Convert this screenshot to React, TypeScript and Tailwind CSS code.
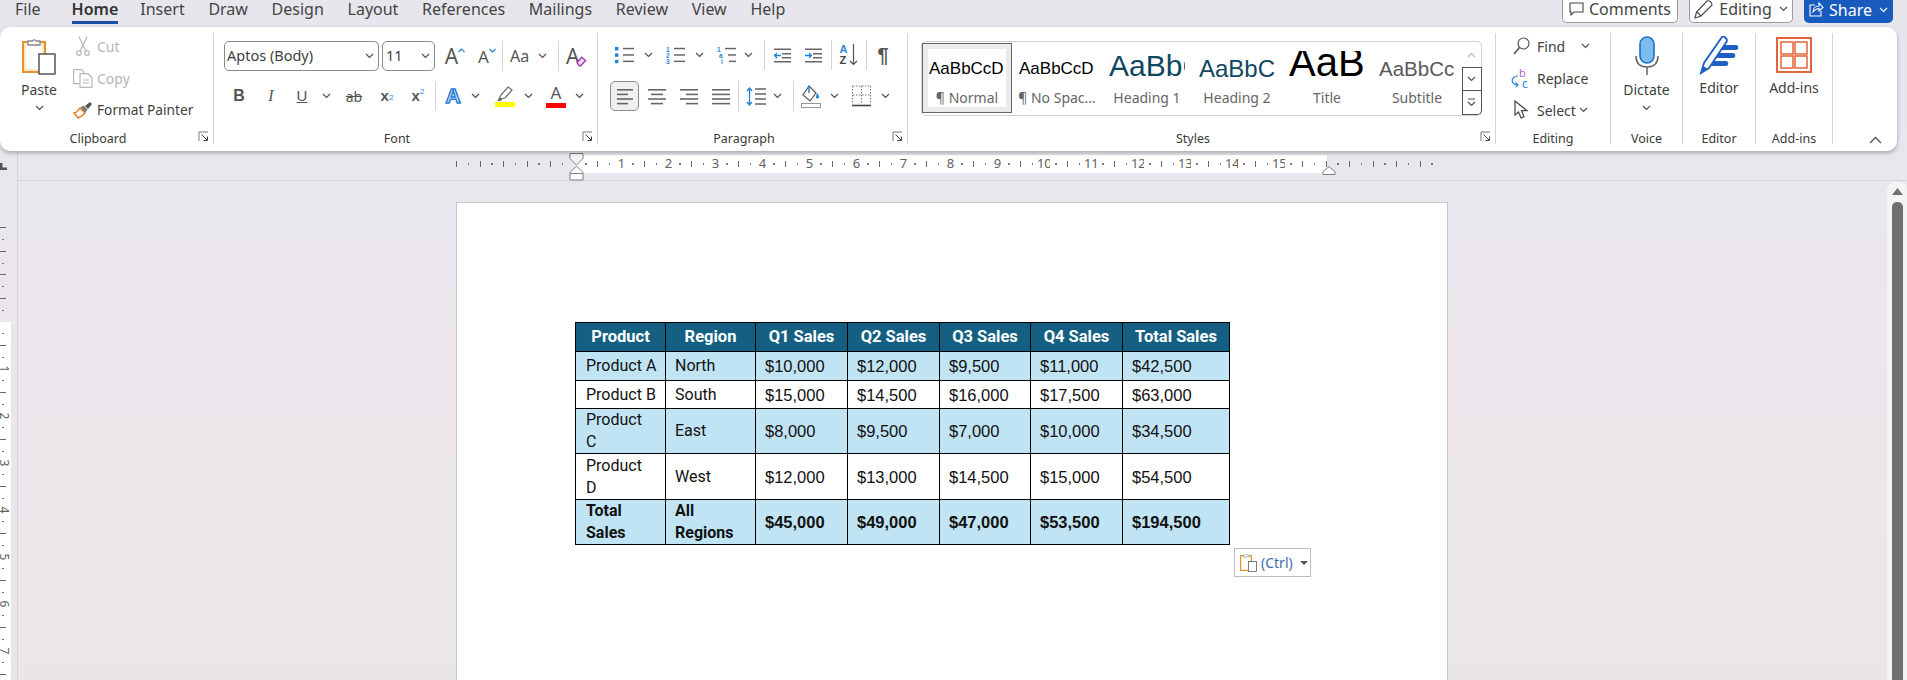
import type { ReactNode } from "react";

const ui = "font-['Noto_Sans',sans-serif]";

function Chev({ className = "" }: { className?: string }) {
  return (
    <svg width="9" height="6" viewBox="0 0 9 6" fill="none" className={className}>
      <path d="M1 1l3.5 3.5L8 1" stroke="#505050" strokeWidth="1.2" />
    </svg>
  );
}

function Slot({ className = "", children }: { className?: string; children?: ReactNode }) {
  return <div className={"flex shrink-0 items-center justify-center " + className}>{children}</div>;
}

function Sep({ className = "" }: { className?: string }) {
  return <div className={"h-[30px] w-px shrink-0 bg-[#d4d4d4] " + className} />;
}

function Launcher() {
  return (
    <svg width="12" height="12" viewBox="0 0 12 12" fill="none" className="absolute right-[3px] top-[1px]">
      <path d="M1 10V1h9" stroke="#777" />
      <path d="M3.5 3.5l5.5 5.5M9.5 5.5v4h-4" stroke="#444" />
    </svg>
  );
}

function Group({ label, launcher, className = "", children }: { label: string; launcher?: boolean; className?: string; children?: ReactNode }) {
  return (
    <div className={"flex h-[111px] shrink-0 flex-col border-r border-[#d4d4d4] " + className}>
      <div className="min-h-0 flex-1">{children}</div>
      <div className={"relative mb-[-4px] h-[18px] text-center text-[12.5px] leading-[18px] text-[#3a3a3a] " + (launcher ? "pr-[17px]" : "")}>
        {label}
        {launcher && <Launcher />}
      </div>
    </div>
  );
}

function PasteIcon({ className = "" }: { className?: string }) {
  return (
    <svg viewBox="0 0 34 38" fill="none" className={className}>
      <rect x="1" y="5" width="22" height="30" fill="#fde7c4" stroke="#e8912d" strokeWidth="2" />
      <rect x="4" y="8" width="16" height="24" fill="#fff" />
      <path d="M6 8V4h4.5a2 2 0 0 1 3.5 0H18v4z" fill="#fff" stroke="#8a8a8a" strokeWidth="1.3" />
      <rect x="17" y="17" width="16" height="20" fill="#fff" stroke="#555" strokeWidth="1.5" />
    </svg>
  );
}

function Bars({ lines, w = 18 }: { lines: [number, number][]; w?: number }) {
  return (
    <svg width={w} height="17" viewBox={`0 0 ${w} 17`} fill="none">
      {lines.map(([a, b], i) => (
        <rect key={i} x={a} y={1 + i * 4.6} width={b - a} height="1.6" fill="#666" />
      ))}
    </svg>
  );
}

function ListIcon({ kind }: { kind: "bullet" | "num" | "multi" }) {
  const marks = kind === "bullet" ? null : kind === "num" ? ["1", "2", "3"] : ["1", "a", "i"];
  const indent = kind === "multi" ? [8, 11, 12] : [8, 8, 8];
  return (
    <svg width="20" height="18" viewBox="0 0 20 18" fill="none">
      {[0, 1, 2].map((i) => (
        <g key={i}>
          {marks ? (
            <text x={kind === "multi" ? i * 2 : 0} y={5.5 + i * 6.2} fontSize="6.5" fontWeight="700" fill="#2a86d0" fontFamily="Liberation Sans, sans-serif">
              {marks[i]}
            </text>
          ) : (
            <rect x="0" y={1 + i * 6.4} width="3.4" height="3.4" fill="#1f83d6" />
          )}
          <rect x={indent[i]} y={1.8 + i * 6.4} width={19 - indent[i]} height="1.5" fill="#666" />
        </g>
      ))}
    </svg>
  );
}

function Indent({ dir }: { dir: "in" | "out" }) {
  return (
    <svg width="19" height="15" viewBox="0 0 19 15" fill="none">
      <rect x="1" y="0.5" width="17" height="1.5" fill="#666" />
      <rect x="9" y="5" width="9" height="1.5" fill="#666" />
      <rect x="9" y="9" width="9" height="1.5" fill="#666" />
      <rect x="1" y="13" width="17" height="1.5" fill="#666" />
      {dir === "out" ? (
        <path d="M8 7.5H1.5M4 5L1.5 7.5 4 10" stroke="#1f83d6" strokeWidth="1.3" />
      ) : (
        <path d="M1 7.5h6.5M5 5l2.5 2.5L5 10" stroke="#1f83d6" strokeWidth="1.3" />
      )}
    </svg>
  );
}

function StyleItem({ label, selected, children }: { label: string; selected?: boolean; children: ReactNode }) {
  return (
    <div className={"mt-px flex h-[70px] w-[90px] shrink-0 flex-col items-center border " + (selected ? "border-[#666] shadow-[inset_0_0_0_5px_#ebebeb]" : "border-transparent")}>
      <div className="ml-[6px] mt-[7px] flex h-[31px] w-[76px] items-end self-start overflow-hidden whitespace-nowrap font-['Liberation_Sans',sans-serif] leading-none">{children}</div>
      <div className="mt-[6px] text-[14px] leading-[20px] text-[#666]">{label}</div>
    </div>
  );
}

function RulerH() {
  const cells = [];
  for (let i = -10; i <= 73; i++) {
    const white = i > 0 && i < 64;
    let bg = white ? "bg-white" : "";
    if (i === 0) bg = "bg-[linear-gradient(to_right,transparent_70%,white_70%)]";
    if (i === 64) bg = "bg-[linear-gradient(to_right,white_50%,transparent_50%)]";
    const num = i > 0 && i <= 60 && i % 4 === 0;
    const bar = i % 2 === 0 && !num && i !== 0;
    cells.push(
      <div key={i} className={"flex h-[18px] w-[11.75px] shrink-0 items-center justify-center " + bg}>
        {num && <span className="text-[13px] text-[#606060]">{i / 4}</span>}
        {bar && <div className="h-[6px] w-px bg-[#666]" />}
        {!num && !bar && i !== 0 && <div className="h-[2px] w-[1.5px] bg-[#777]" />}
      </div>
    );
  }
  return (
    <div className="relative h-[30px] shrink-0 border-b border-[#d6d6dc]">
      <div className="ml-[433px] flex pt-[4px]">{cells}</div>
      <svg width="15" height="28" viewBox="0 0 15 28" fill="none" className="absolute left-[551px] top-[2px]">
        <path d="M1 .5h13v5L7.5 12 1 5.500z" fill="#f5f5f5" stroke="#808080" />
        <path d="M7.500 13L14 19.500V27H1v-7.500z" fill="#fff" stroke="#808080" />
        <path d="M1 20.500h13" stroke="#808080" />
      </svg>
      <svg width="14" height="9" viewBox="0 0 14 9" fill="none" className="absolute left-[1304px] top-[15px]">
        <path d="M1 8.500V5.500L7 .7l6 4.800v3z" fill="#fff" stroke="#808080" />
      </svg>
    </div>
  );
}

function RulerV() {
  const cells = [];
  for (let j = -8; j <= 31; j++) {
    const num = j > 0 && j % 4 === 0;
    const bar = j % 2 === 0 && !num && j !== 0;
    let bg = j > 0 ? "bg-white" : "";
    if (j === 0) bg = "bg-[linear-gradient(to_bottom,transparent_50%,white_50%)]";
    cells.push(
      <div key={j} className={"flex h-[11.75px] w-[11px] shrink-0 items-center " + bg}>
        {num && <span className="ml-[-1px] block w-[10px] rotate-90 text-center text-[12px] leading-[10px] text-[#606060]">{j / 4}</span>}
        {bar && <div className="h-px w-[6px] bg-[#666]" />}
        {!num && !bar && j !== 0 && <div className="ml-[2px] h-px w-[2px] bg-[#777]" />}
      </div>
    );
  }
  return (
    <div className="w-[18px] shrink-0 overflow-hidden border-r border-[#d6d6dc]">
      <svg width="7" height="7" viewBox="0 0 7 7" className="mt-[12px] block">
        <path d="M0 0h2.500v4.500H7V7H0z" fill="#555" />
      </svg>
      <div className="mt-[52px]">{cells}</div>
    </div>
  );
}

const rows: { name: ReactNode; region: ReactNode; vals: string[]; band: boolean; h: string; bold?: boolean }[] = [
  { name: "Product A", region: "North", vals: ["$10,000", "$12,000", "$9,500", "$11,000", "$42,500"], band: true, h: "h-[29px]" },
  { name: "Product B", region: "South", vals: ["$15,000", "$14,500", "$16,000", "$17,500", "$63,000"], band: false, h: "h-[28px]" },
  { name: <>Product<br />C</>, region: "East", vals: ["$8,000", "$9,500", "$7,000", "$10,000", "$34,500"], band: true, h: "h-[45px]" },
  { name: <>Product<br />D</>, region: "West", vals: ["$12,000", "$13,000", "$14,500", "$15,000", "$54,500"], band: false, h: "h-[46px]" },
  { name: <>Total<br />Sales</>, region: <>All<br />Regions</>, vals: ["$45,000", "$49,000", "$47,000", "$53,500", "$194,500"], band: true, h: "h-[45px]", bold: true },
];

const heads = ["Product", "Region", "Q1 Sales", "Q2 Sales", "Q3 Sales", "Q4 Sales", "Total Sales"];
const cols = ["w-[90px]", "w-[90px]", "w-[92px]", "w-[92px]", "w-[91px]", "w-[92px]", "w-[107px]"];

function SalesTable() {
  return (
    <table className="ml-[118px] mt-[119px] w-[655px] table-fixed border-collapse border border-black font-['Roboto',sans-serif] text-[16px] leading-[22px] text-[#111]">
      <colgroup>
        {cols.map((c, i) => (
          <col key={i} className={c} />
        ))}
      </colgroup>
      <thead>
        <tr className="h-[29px] bg-[#156082]">
          {heads.map((h) => (
            <th key={h} className="border border-black p-0 text-center text-[16.5px] font-bold text-white">
              {h}
            </th>
          ))}
        </tr>
      </thead>
      <tbody>
        {rows.map((r, i) => (
          <tr key={i} className={r.h + " " + (r.band ? "bg-[#c1e4f5]" : "bg-white") + (r.bold ? " font-bold" : "")}>
            <td className="border border-black py-0 pl-[10px] pr-0 whitespace-nowrap">{r.name}</td>
            <td className="border border-black py-0 pl-[9px] pr-0">{r.region}</td>
            {r.vals.map((v, k) => (
              <td key={k} className="border border-black py-0 pl-[9px] pr-0 font-['Liberation_Sans',sans-serif] text-[16.5px]">
                {v}
              </td>
            ))}
          </tr>
        ))}
      </tbody>
    </table>
  );
}

function Ribbon() {
  return (
    <div className="z-10 flex h-[124px] w-[1897px] shrink-0 rounded-[10px] bg-white pt-[6px] text-[14px] text-[#3f3f3f] shadow-[0_2px_4px_rgba(0,0,0,0.28)]">
      <Group label="Clipboard" launcher className="w-[214px]">
        <div className="flex">
          <div className="ml-[14px] flex w-[50px] flex-col items-center">
            <PasteIcon className="mt-[4px] h-[38px] w-[34px]" />
            <div className="mt-[5px] text-[14px] leading-[20px]">Paste</div>
            <Chev className="mt-[5px]" />
          </div>
          <div className="ml-[8px] flex flex-col">
            <div className="flex h-[26px] items-center text-[#b5b5b5]">
              <Slot className="w-[21px]">
                <svg width="14" height="20" viewBox="0 0 14 20" fill="none" stroke="#b8b8b8" strokeWidth="1.2">
                  <path d="M3 0.500l6.500 14M11 0.500l-6.500 14" />
                  <circle cx="3" cy="17" r="2.300" />
                  <circle cx="11" cy="17" r="2.300" />
                </svg>
              </Slot>
              <span className="ml-[4px]">Cut</span>
            </div>
            <div className="mt-[6px] flex h-[26px] items-center text-[#b5b5b5]">
              <Slot className="w-[21px]">
                <svg width="20" height="19" viewBox="0 0 20 19" fill="none" stroke="#b8b8b8" strokeWidth="1.2">
                  <path d="M.6.6h8l2 2v3M.6.6v14h6" />
                  <path d="M7 4.600h8l4 4v9.800H7z" fill="#fff" />
                  <path d="M10 11h6M10 14h6" />
                </svg>
              </Slot>
              <span className="ml-[4px]">Copy</span>
            </div>
            <div className="mt-[6px] flex h-[26px] items-center">
              <Slot className="w-[21px]">
                <svg width="20" height="18" viewBox="0 0 20 18" fill="none">
                  <path d="M1 12c3 0 4-3 6-5l5 5c-2 2-4 4-7 5-1-1-2-3-4-5z" fill="#fff" stroke="#e5781c" strokeWidth="1.500" />
                  <path d="M7.500 6.500l3-2 4 4-2 3z" fill="#777" />
                  <path d="M12 5l5-4 2 2-4 5z" fill="#555" />
                </svg>
              </Slot>
              <span className="ml-[4px] whitespace-nowrap text-[13.700px]">Format Painter</span>
            </div>
          </div>
        </div>
      </Group>

      <Group label="Font" launcher className="w-[384px]">
        <div className="ml-[10px] mt-[8px] flex h-[30px] items-center">
          <div className="flex h-[30px] w-[155px] shrink-0 items-center justify-between rounded-[5px] border border-[#8a8a8a] pl-[2px] pr-[4px] text-[14.500px]">
            Aptos (Body)
            <Chev />
          </div>
          <div className="ml-[3px] flex h-[30px] w-[53px] shrink-0 items-center justify-between rounded-[5px] border border-[#8a8a8a] pl-[3px] pr-[4px] text-[14.500px]">
            11
            <Chev />
          </div>
          <Slot className="ml-[6px] w-[28px] text-[21px] leading-none text-[#555]">
            A
            <svg width="7" height="5" viewBox="0 0 7 5" fill="none" className="mb-[12px]">
              <path d="M.5 4l3-3 3 3" stroke="#2d84c9" strokeWidth="1.200" />
            </svg>
          </Slot>
          <Slot className="ml-[6px] w-[24px] text-[17px] leading-none text-[#555]">
            A
            <svg width="7" height="5" viewBox="0 0 7 5" fill="none" className="mb-[12px]">
              <path d="M.5 1l3 3 3-3" stroke="#2d84c9" strokeWidth="1.200" />
            </svg>
          </Slot>
          <Sep className="ml-[3px]" />
          <div className="ml-[7px] w-[22px] text-[16px] text-[#555]">Aa</div>
          <Chev className="ml-[6px]" />
          <Sep className="ml-[11px]" />
          <Slot className="ml-[7px] w-[21px]">
            <span className="text-[21px] leading-none text-[#555]">A</span>
            <svg width="11" height="11" viewBox="0 0 10 10" fill="none" className="ml-[-3px] mt-[11px]">
              <path d="M1 6l4.500-5L9 4 4.500 9H3z" fill="#f0d9f2" stroke="#a335b0" strokeWidth="1.300" />
            </svg>
          </Slot>
        </div>
        <div className="ml-[9px] mt-[10px] flex h-[30px] items-center text-[#555]">
          <Slot className="w-[32px] font-['Liberation_Sans',sans-serif] text-[16px] font-bold">B</Slot>
          <Slot className="w-[32px] font-['Liberation_Serif',serif] text-[16px] italic">I</Slot>
          <Slot className="w-[30px] font-['Liberation_Sans',sans-serif] text-[15px] underline">U</Slot>
          <Slot className="w-[18px]"><Chev /></Slot>
          <Slot className="w-[38px] text-[14px] line-through">ab</Slot>
          <Slot className="w-[28px] font-['Liberation_Sans',sans-serif] text-[15px] font-bold">
            x<sub className="text-[8px] font-normal text-[#2b88d8]">2</sub>
          </Slot>
          <Slot className="w-[34px] font-['Liberation_Sans',sans-serif] text-[15px] font-bold">
            x<sup className="text-[8px] font-normal text-[#2b88d8]">2</sup>
          </Slot>
          <Sep />
          <Slot className="w-[34px] font-['Liberation_Sans',sans-serif] text-[21px] font-bold text-[#dceefc] [-webkit-text-stroke:1.5px_#2b7cd3]">A</Slot>
          <Slot className="w-[10px]"><Chev /></Slot>
          <div className="w-[14px] shrink-0" />
          <div className="flex w-[22px] shrink-0 flex-col items-center">
            <svg width="18" height="15" viewBox="0 0 18 15" fill="none">
              <path d="M3 13l2-4 7-8 4 3-7 8z" fill="#fff" stroke="#666" strokeWidth="1.200" />
              <path d="M1 15l3-3 2 1.500-1 1.500z" fill="#666" />
            </svg>
            <div className="mt-[1px] h-[5px] w-[20px] bg-[#ffff00]" />
          </div>
          <Slot className="w-[24px]"><Chev /></Slot>
          <div className="flex w-[32px] shrink-0 flex-col items-center">
            <span className="h-[17px] text-[17px] leading-[17px] text-[#555]">A</span>
            <div className="mt-[2px] h-[5px] w-[20px] bg-[#ff0000]" />
          </div>
          <Slot className="w-[14px]"><Chev /></Slot>
        </div>
      </Group>

      <Group label="Paragraph" launcher className="w-[310px]">
        <div className="ml-[14px] mt-[6px] flex h-[32px] items-center">
          <Slot className="w-[25px]"><ListIcon kind="bullet" /></Slot>
          <Slot className="w-[22px]"><Chev /></Slot>
          <Slot className="w-[33px]"><ListIcon kind="num" /></Slot>
          <Slot className="w-[14px]"><Chev /></Slot>
          <Slot className="ml-[10px] w-[21px]"><ListIcon kind="multi" /></Slot>
          <Slot className="w-[23px]"><Chev /></Slot>
          <Sep className="ml-[4px]" />
          <Slot className="w-[34px]"><Indent dir="out" /></Slot>
          <Slot className="w-[29px]"><Indent dir="in" /></Slot>
          <Sep className="ml-[3px]" />
          <Slot className="w-[34px]">
            <div className="flex flex-col font-['Liberation_Sans',sans-serif] text-[11px] font-bold leading-[11px]">
              <span className="text-[#2b88d8]">A</span>
              <span className="text-[#444]">Z</span>
            </div>
            <svg width="9" height="22" viewBox="0 0 9 22" fill="none" className="ml-[2px]">
              <path d="M4.500 0v20M1 17l3.500 3.500L8 17" stroke="#555" strokeWidth="1.200" />
            </svg>
          </Slot>
          <Sep />
          <Slot className="w-[32px] font-['Liberation_Sans',sans-serif] text-[20px] font-bold text-[#555]">¶</Slot>
        </div>
        <div className="ml-[12px] mt-[10px] flex h-[30px] items-center">
          <Slot className="h-[30px] w-[29px] rounded-[5px] border border-[#8a8a8a] bg-[#f0f0f0]">
            <Bars lines={[[0, 16], [0, 11], [0, 16], [0, 11]]} w={16} />
          </Slot>
          <Slot className="ml-[9px] w-[18px]"><Bars lines={[[0, 18], [3, 15], [0, 18], [3, 15]]} /></Slot>
          <Slot className="ml-[14px] w-[18px]"><Bars lines={[[0, 18], [6, 18], [0, 18], [6, 18]]} /></Slot>
          <Slot className="ml-[14px] w-[18px]"><Bars lines={[[0, 18], [0, 18], [0, 18], [0, 18]]} /></Slot>
          <Sep className="ml-[8px]" />
          <Slot className="ml-[7px] w-[20px]">
            <svg width="20" height="19" viewBox="0 0 20 19" fill="none">
              <path d="M3.500 1v17M1 4l2.500-3L6 4M1 15l2.500 3L6 15" stroke="#1f83d6" strokeWidth="1.300" />
              <path d="M9 2h11M9 7h11M9 12h11M9 17h11" stroke="#666" strokeWidth="1.500" />
            </svg>
          </Slot>
          <Slot className="w-[22px]"><Chev /></Slot>
          <Sep className="ml-[5px]" />
          <Slot className="ml-[7px] w-[20px]">
            <svg width="20" height="23" viewBox="0 0 20 23" fill="none">
              <path d="M8 1L2 10l7 6 6-8z" fill="#fff" stroke="#555" strokeWidth="1.200" />
              <path d="M8 1v7" stroke="#1f83d6" strokeWidth="1.500" />
              <path d="M16 8c1.500 2 2 3 2 4a1.500 1.500 0 0 1-3 0c0-1 .5-2 1-4z" fill="#1f83d6" />
              <rect x="0.500" y="18.500" width="19" height="4" fill="#fff" stroke="#999" />
            </svg>
          </Slot>
          <Slot className="w-[26px]"><Chev /></Slot>
          <Slot className="ml-[5px] w-[19px]">
            <svg width="19" height="22" viewBox="0 0 19 22" fill="none">
              <path d="M.5 1v18M9.500 1v18M18.500 1v18M1 1h17M1 10h17" stroke="#777" strokeDasharray="1.500 1.500" />
              <path d="M0 20.500h19" stroke="#444" strokeWidth="1.600" />
            </svg>
          </Slot>
          <Slot className="w-[28px]"><Chev /></Slot>
        </div>
      </Group>

      <Group label="Styles" launcher className="w-[588px]">
        <div className="ml-[13px] mt-[8px] flex h-[75px] w-[561px] rounded-[5px] border border-[#d2d2d2]">
          <div className="flex">
            <StyleItem label="¶ Normal" selected>
              <span className="pb-[5px] text-[17px] text-black">AaBbCcD</span>
            </StyleItem>
            <StyleItem label="¶ No Spac...">
              <span className="pb-[5px] text-[17px] text-black">AaBbCcD</span>
            </StyleItem>
            <StyleItem label="Heading 1">
              <span className="pb-[1px] text-[30px] text-[#0f4761]">AaBbCc</span>
            </StyleItem>
            <StyleItem label="Heading 2">
              <span className="pb-[1px] text-[24px] text-[#0f4761]">AaBbCc</span>
            </StyleItem>
            <StyleItem label="Title">
              <span className="text-[40px] text-black">AaB</span>
            </StyleItem>
            <StyleItem label="Subtitle">
              <span className="pb-[3px] text-[20.500px] text-[#595959]">AaBbCc</span>
            </StyleItem>
          </div>
          <div className="ml-auto flex w-[19px] shrink-0 flex-col items-center">
            <Slot className="h-[25px] w-full">
              <svg width="9" height="6" viewBox="0 0 9 6" fill="none">
                <path d="M1 5l3.500-3.500L8 5" stroke="#bbb" strokeWidth="1.200" />
              </svg>
            </Slot>
            <Slot className="h-[24px] w-[20px] border border-[#555]"><Chev /></Slot>
            <Slot className="h-[24px] w-[20px] rounded-br-[5px] border-x border-b border-[#555]">
              <svg width="9" height="9" viewBox="0 0 9 9" fill="none">
                <path d="M1 1h7M1 4l3.500 3.500L8 4" stroke="#505050" strokeWidth="1.200" />
              </svg>
            </Slot>
          </div>
        </div>
      </Group>

      <Group label="Editing" className="w-[115px]">
        <div className="flex h-[26px] items-center pl-[12px]">
          <Slot className="w-[26px]">
            <svg width="17" height="18" viewBox="0 0 17 18" fill="none" stroke="#555" strokeWidth="1.200">
              <circle cx="10.500" cy="6.500" r="5.500" />
              <path d="M6.500 10.500L1 17" strokeWidth="1.600" />
            </svg>
          </Slot>
          <span className="ml-[3px]">Find</span>
          <Chev className="ml-[16px]" />
        </div>
        <div className="mt-[6px] flex h-[26px] items-center pl-[12px]">
          <Slot className="w-[26px]">
            <svg width="20" height="21" viewBox="0 0 20 21" fill="none">
              <text x="8" y="9" fontSize="11" fill="#b25ccb" fontFamily="Noto Sans, sans-serif">b</text>
              <text x="11" y="20" fontSize="12" fill="#2b88d8" fontFamily="Noto Sans, sans-serif">c</text>
              <path d="M7 8C2 8 0 12 2 15c1 1.500 3 2 5 2M4.500 14.500L7 17l-2.500 2" stroke="#2b88d8" strokeWidth="1.200" />
            </svg>
          </Slot>
          <span className="ml-[3px]">Replace</span>
        </div>
        <div className="mt-[6px] flex h-[26px] items-center pl-[12px]">
          <Slot className="w-[26px]">
            <svg width="15" height="20" viewBox="0 0 15 20" fill="none">
              <path d="M1 1v14l3.500-3 2.500 6 3-1.300-2.500-6H13z" fill="#fff" stroke="#444" strokeWidth="1.200" />
            </svg>
          </Slot>
          <span className="ml-[3px]">Select</span>
          <Chev className="ml-[3px]" />
        </div>
      </Group>

      <Group label="Voice" className="w-[72px]">
        <div className="flex flex-col items-center">
          <svg width="24" height="39" viewBox="0 0 24 39" fill="none" className="mt-[3px]">
            <rect x="5" y="1" width="14" height="26" rx="7" fill="#7ebbee" stroke="#1b74c5" strokeWidth="1.600" />
            <path d="M1 20c0 8 5 11 11 11s11-3 11-11M12 31v8" stroke="#666" strokeWidth="1.500" />
          </svg>
          <div className="mt-[5px] text-[14px] leading-[20px]">Dictate</div>
          <Chev className="mt-[5px]" />
        </div>
      </Group>

      <Group label="Editor" className="w-[73px]">
        <div className="flex flex-col items-center">
          <svg width="40" height="39" viewBox="0 0 40 39" fill="none" className="mt-[3px]">
            <path d="M22 9h15c3 0 3 5 0 5H20zM19 17h15c3 0 3 5 0 5H16zM15 25h12c3 0 3 5 0 5H12z" fill="#1f5fc4" />
            <path d="M2 37l3-10L23 1c2-1 5 1 5 4L10 32z" fill="#fff" stroke="#1f5fc4" strokeWidth="1.800" />
            <path d="M1 38l3-8 5 3z" fill="#1f5fc4" />
          </svg>
          <div className="mt-[3px] text-[14px] leading-[20px]">Editor</div>
        </div>
      </Group>

      <Group label="Add-ins" className="w-[77px]">
        <div className="flex flex-col items-center">
          <svg width="36" height="36" viewBox="0 0 36 36" fill="none" className="mt-[4px]">
            <rect x="1" y="1" width="34" height="34" stroke="#e2643b" strokeWidth="2" />
            <rect x="5" y="5" width="12" height="12" stroke="#e2643b" strokeWidth="1.500" />
            <rect x="19" y="5" width="12" height="12" stroke="#e2643b" strokeWidth="1.500" />
            <rect x="5" y="19" width="12" height="12" stroke="#e2643b" strokeWidth="1.500" />
            <rect x="19" y="19" width="12" height="12" stroke="#e2643b" strokeWidth="1.500" />
          </svg>
          <div className="mt-[5px] text-[14px] leading-[20px]">Add-ins</div>
        </div>
      </Group>

      <div className="flex flex-1 items-end justify-center pb-[7px] pl-[21px]">
        <svg width="13" height="8" viewBox="0 0 13 8" fill="none">
          <path d="M1 7l5.500-5.500L12 7" stroke="#505050" strokeWidth="1.300" />
        </svg>
      </div>
    </div>
  );
}

export default function App() {
  const tabs = ["Insert", "Draw", "Design", "Layout", "References", "Mailings", "Review", "View", "Help"];
  return (
    <div className={"flex h-[680px] w-full flex-col overflow-hidden bg-[linear-gradient(to_bottom,#e7e6ec_0%,#e9e6ed_30%,#ece5ec_50%,#ebe6e9_75%,#eae6e6_100%)] " + ui}>
      <div className="flex h-[27px] shrink-0 text-[16px] text-[#444]">
        <div className="ml-[15px] leading-[19px]">File</div>
        <div className="ml-[31px] h-[24px] border-b-[3px] border-[#1a4fa3] font-semibold leading-[19px] text-[#333]">Home</div>
        <div className="ml-[22px] flex gap-[23.700px] leading-[19px]">
          {tabs.map((t) => (
            <span key={t}>{t}</span>
          ))}
        </div>
        <div className="ml-auto mr-[14px] flex gap-[11px]">
          <div className="flex h-[23px] w-[116px] items-center justify-center gap-[5px] rounded-b-[5px] border-x border-b border-[#9a9a9a] bg-white pb-[4px] text-[16px]">
            <svg width="15" height="15" viewBox="0 0 15 15" fill="none">
              <path d="M1 1h13v9H5l-3 3v-3H1z" stroke="#444" strokeWidth="1.100" />
            </svg>
            Comments
          </div>
          <div className="flex h-[23px] w-[104px] items-center justify-center gap-[5px] rounded-b-[5px] border-x border-b border-[#9a9a9a] bg-white pb-[4px] text-[16px]">
            <svg width="20" height="19" viewBox="0 0 20 19" fill="none">
              <path d="M1 18l1.500-6L13 1c2-1 5 1 5 4L7 16z" stroke="#444" strokeWidth="1.100" />
              <path d="M3 12l4 4" stroke="#444" strokeWidth="1.100" />
            </svg>
            Editing
            <Chev className="ml-[2px]" />
          </div>
          <div className="flex h-[23px] w-[89px] items-center justify-center gap-[5px] rounded-b-[5px] bg-[#185abd] pb-[4px] text-[16px] text-white">
            <svg width="15" height="15" viewBox="0 0 15 15" fill="none" stroke="#fff" strokeWidth="1.100">
              <path d="M6 3H1v11h11V9" />
              <path d="M4 10c0-4 3-6 6-6V1l4 4.500L10 9V6.500c-2 0-4 1-6 3.500z" />
            </svg>
            Share
            <svg width="9" height="6" viewBox="0 0 9 6" fill="none" className="ml-[2px]">
              <path d="M1 1l3.500 3.500L8 1" stroke="#fff" strokeWidth="1.200" />
            </svg>
          </div>
        </div>
      </div>

      <Ribbon />

      <div className="flex min-h-0 flex-1">
        <RulerV />
        <div className="flex min-w-0 flex-1 flex-col">
          <RulerH />
          <div className="flex min-h-0 flex-1">
            <div className="ml-[438px] mt-[21px] h-[600px] w-[992px] shrink-0 border border-[#c8c8c8] bg-white">
              <SalesTable />
              <div className="ml-[777px] mt-[3px] flex h-[29px] w-[77px] items-center border border-[#bdbdbd] bg-white pl-[5px]">
                <PasteIcon className="h-[19px] w-[17px]" />
                <span className="ml-[4px] text-[14px] text-[#3f6ea8]">(Ctrl)</span>
                <svg width="8" height="4" viewBox="0 0 8 4" className="ml-[7px]">
                  <path d="M0 0h8L4 4z" fill="#555" />
                </svg>
              </div>
            </div>
            <div className="ml-auto mt-px flex w-[20px] shrink-0 flex-col items-center rounded-t-[8px] bg-[#f5f4f5]">
              <svg width="11" height="7" viewBox="0 0 11 7" className="mt-[6px]">
                <path d="M5.500 0L11 7H0z" fill="#707070" />
              </svg>
              <div className="mt-[7px] w-[11px] flex-1 rounded-t-[5px] bg-[#707070]" />
            </div>
          </div>
        </div>
      </div>
    </div>
  );
}
